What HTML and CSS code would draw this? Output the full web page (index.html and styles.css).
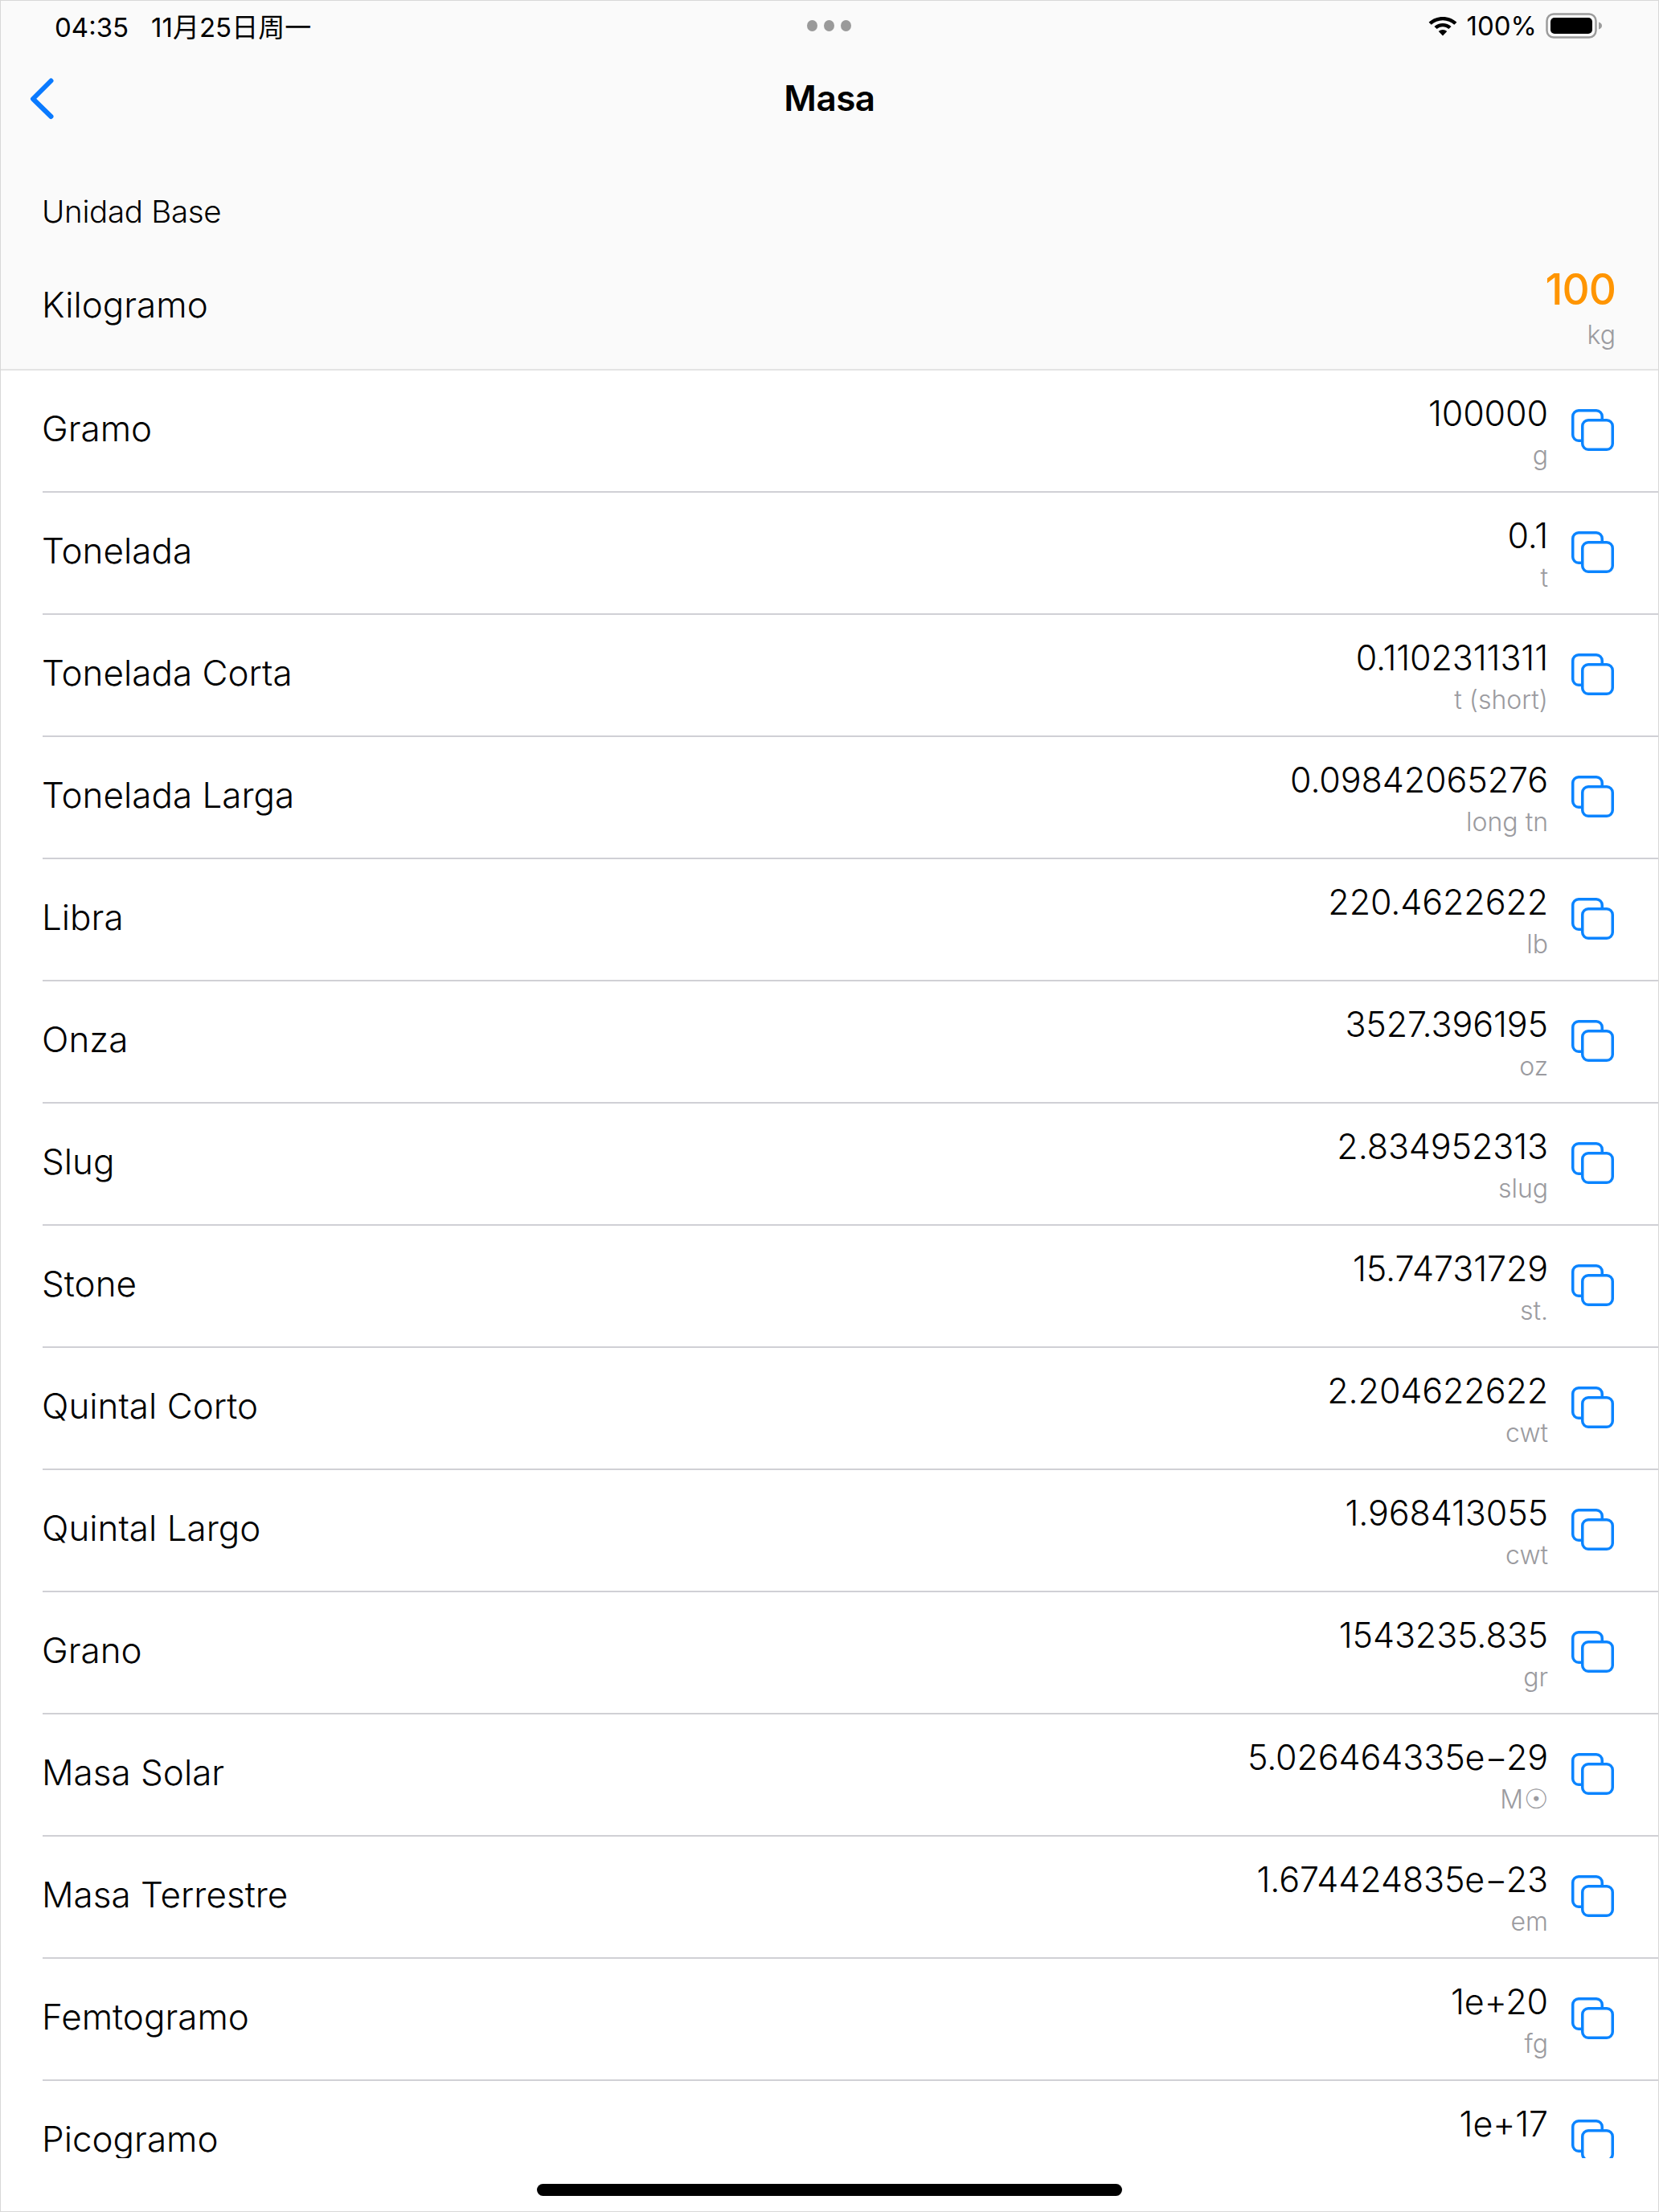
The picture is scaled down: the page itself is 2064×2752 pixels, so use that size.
FILE: index.html
```html
<!DOCTYPE html>
<html lang="es">
<head>
<meta charset="utf-8">
<title>Masa</title>
<link rel="stylesheet" href="styles.css">
</head>
<body>
<div class="screen">
  <header class="top">
    <div class="status">
      <div class="status-left"><span>04:35</span><span>11月25日周一</span></div>
      <div class="dots"><i></i><i></i><i></i></div>
      <div class="status-right">
        <svg class="wifi" width="38" height="28" viewBox="0 0 36 28" preserveAspectRatio="none"><path d="M18 3C11.500 3 5.800 5.500 1.500 9.700L4.500 12.700C8 9.300 12.800 7.200 18 7.200S28 9.300 31.500 12.700L34.500 9.700C30.200 5.500 24.500 3 18 3Z"/><path d="M18 11C14.200 11 10.700 12.500 8 15L11 18C12.900 16.300 15.300 15.200 18 15.200S23.100 16.300 25 18L28 15C25.300 12.500 21.800 11 18 11Z"/><path d="M18 19C16.100 19 14.400 19.700 13 21L18 26.500L23 21C21.600 19.700 19.900 19 18 19Z"/></svg>
        <span>100%</span>
        <svg class="battery" width="72" height="32" viewBox="0 0 72 32"><rect x="1.500" y="1.500" width="61" height="29" rx="8.500" fill="none" stroke="#9c9c9c" stroke-width="2.500"/><rect x="6" y="6" width="52" height="20" rx="5" fill="#000"/><path d="M66 11.500C68.500 12.300 70 14 70 16S68.500 19.700 66 20.500Z" fill="#9c9c9c"/></svg>
      </div>
    </div>
    <nav class="nav">
      <svg class="back" width="32" height="52" viewBox="0 0 32 52"><path d="M27.500 3.500L5 26L27.500 48" fill="none" stroke="#0a7aff" stroke-width="6" stroke-linecap="round" stroke-linejoin="round"/></svg>
      <h1>Masa</h1>
    </nav>
    <p class="section">Unidad Base</p>
    <div class="base">
      <span class="name">Kilogramo</span>
      <div class="base-val"><div class="big">100</div><div class="unit">kg</div></div>
    </div>
  </header>
  <main class="list">
    <div class="row"><span class="name">Gramo</span><div class="val"><div class="num">100000</div><div class="unit">g</div></div><svg class="copy" width="56" height="54" viewBox="0 0 56 54"><use href="#c"/></svg></div>
    <div class="row"><span class="name">Tonelada</span><div class="val"><div class="num">0.1</div><div class="unit">t</div></div><svg class="copy" width="56" height="54" viewBox="0 0 56 54"><use href="#c"/></svg></div>
    <div class="row"><span class="name">Tonelada Corta</span><div class="val"><div class="num">0.1102311311</div><div class="unit">t (short)</div></div><svg class="copy" width="56" height="54" viewBox="0 0 56 54"><use href="#c"/></svg></div>
    <div class="row"><span class="name">Tonelada Larga</span><div class="val"><div class="num">0.09842065276</div><div class="unit">long tn</div></div><svg class="copy" width="56" height="54" viewBox="0 0 56 54"><use href="#c"/></svg></div>
    <div class="row"><span class="name">Libra</span><div class="val"><div class="num">220.4622622</div><div class="unit">lb</div></div><svg class="copy" width="56" height="54" viewBox="0 0 56 54"><use href="#c"/></svg></div>
    <div class="row"><span class="name">Onza</span><div class="val"><div class="num">3527.396195</div><div class="unit">oz</div></div><svg class="copy" width="56" height="54" viewBox="0 0 56 54"><use href="#c"/></svg></div>
    <div class="row"><span class="name">Slug</span><div class="val"><div class="num">2.834952313</div><div class="unit">slug</div></div><svg class="copy" width="56" height="54" viewBox="0 0 56 54"><use href="#c"/></svg></div>
    <div class="row"><span class="name">Stone</span><div class="val"><div class="num">15.74731729</div><div class="unit">st.</div></div><svg class="copy" width="56" height="54" viewBox="0 0 56 54"><use href="#c"/></svg></div>
    <div class="row"><span class="name">Quintal Corto</span><div class="val"><div class="num">2.204622622</div><div class="unit">cwt</div></div><svg class="copy" width="56" height="54" viewBox="0 0 56 54"><use href="#c"/></svg></div>
    <div class="row"><span class="name">Quintal Largo</span><div class="val"><div class="num">1.968413055</div><div class="unit">cwt</div></div><svg class="copy" width="56" height="54" viewBox="0 0 56 54"><use href="#c"/></svg></div>
    <div class="row"><span class="name">Grano</span><div class="val"><div class="num">1543235.835</div><div class="unit">gr</div></div><svg class="copy" width="56" height="54" viewBox="0 0 56 54"><use href="#c"/></svg></div>
    <div class="row"><span class="name">Masa Solar</span><div class="val"><div class="num">5.026464335e−29</div><div class="unit">M<span class="sun">☉</span></div></div><svg class="copy" width="56" height="54" viewBox="0 0 56 54"><use href="#c"/></svg></div>
    <div class="row"><span class="name">Masa Terrestre</span><div class="val"><div class="num">1.674424835e−23</div><div class="unit">em</div></div><svg class="copy" width="56" height="54" viewBox="0 0 56 54"><use href="#c"/></svg></div>
    <div class="row"><span class="name">Femtogramo</span><div class="val"><div class="num">1e+20</div><div class="unit">fg</div></div><svg class="copy" width="56" height="54" viewBox="0 0 56 54"><use href="#c"/></svg></div>
    <div class="row"><span class="name">Picogramo</span><div class="val"><div class="num">1e+17</div><div class="unit">&nbsp;</div></div><svg class="copy" width="56" height="54" viewBox="0 0 56 54"><use href="#c"/></svg></div>
  </main>
  <div class="home"></div>
</div>
<svg class="defs" width="0" height="0"><defs><g id="c" fill="none" stroke="#0a84ff" stroke-width="3.500"><path d="M39.250 14.750V10A7.250 7.250 0 0 0 32 2.750H10A7.250 7.250 0 0 0 2.750 10V33A7.250 7.250 0 0 0 10 40.250H14.750"/><rect x="14.750" y="14.750" width="37.500" height="36.500" rx="7.250"/></g></defs></svg>
</body>
</html>
```
FILE: styles.css
```css
* { box-sizing: border-box; }
html, body { margin: 0; padding: 0; background: #fff; }
body { font-family: Inter, "Noto Sans CJK SC", sans-serif; color: #000; }
.defs { position: absolute; }
.screen { position: relative; width: 2064px; height: 2752px; border: 1px solid #d8d8d8; overflow: hidden; background: #fff; }
.top { height: 460px; background: #fafafa; border-bottom: 2px solid #e4e4e4; }
.status { height: 62px; display: flex; align-items: center; justify-content: space-between; padding: 0 68px 0 67px; position: relative; font-size: 33px; font-weight: 400; }
.status-left { display: flex; align-items: baseline; gap: 28px; }
.status-right { display: flex; align-items: center; gap: 11px; }
.dots { position: absolute; left: 1003px; top: 24px; display: flex; gap: 8px; }
.dots i { display: block; width: 13px; height: 14px; border-radius: 50%; background: #9a9a9a; }
.nav { height: 120px; display: flex; align-items: center; justify-content: center; position: relative; }
.nav h1 { margin: 0 0 2px; font-size: 44px; font-weight: 600; letter-spacing: -0.5px; }
.back { position: absolute; left: 35px; top: 34px; }
.section { margin: 0; padding: 57px 51px 0; font-size: 38.5px; font-weight: 300; line-height: 46px; letter-spacing: -0.3px; }
.base { display: flex; justify-content: space-between; align-items: center; padding: 0 53px 0 51px; height: 120px; margin-top: 33px; }
.name { font-size: 44px; font-weight: 300; }
.base-val { text-align: right; padding-top: 8px; }
.big { font-size: 53px; font-weight: 500; color: #ff9500; line-height: 62px; letter-spacing: -1px; }
.base-val .unit { margin-top: 6px; }
.unit { font-size: 32px; font-weight: 300; color: #9b9ba0; line-height: 40px; }
.sun { font-family: "DejaVu Sans", sans-serif; font-size: 34px; line-height: 1; margin-left: 1px; }
.list { height: 2224px; overflow: hidden; }
.row { height: 152px; margin-left: 52px; padding-right: 53px; display: flex; align-items: center; border-bottom: 2px solid #d0d0d5; }
.row .name { flex: 1; margin: 0 0 6px -1px; }
.val { text-align: right; margin-right: 28px; padding-bottom: 4px; }
.num { font-size: 43px; font-weight: 300; line-height: 65px; letter-spacing: -0.1px; }
.copy { display: block; flex: none; margin-bottom: 2px; }
.home { position: absolute; left: 667px; top: 2716px; width: 728px; height: 15px; border-radius: 8px; background: #000; }
```
